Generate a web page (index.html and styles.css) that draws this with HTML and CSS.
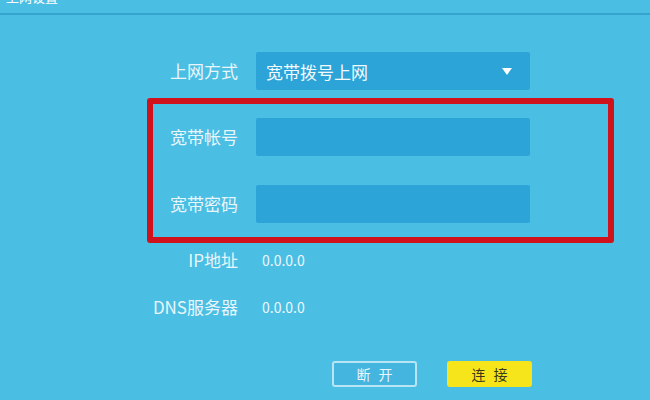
FILE: index.html
```html
<!DOCTYPE html>
<html lang="zh-CN">
<head>
<meta charset="utf-8">
<title>上网设置</title>
<link rel="stylesheet" href="styles.css">
</head>
<body>
<div class="page">
  <header class="topbar"><span class="title">上网设置</span></header>
  <main class="form">
    <div class="row row-select">
      <label class="label">上网方式</label>
      <div class="select">
        <span class="select-text">宽带拨号上网</span>
        <svg class="caret" width="10" height="7" viewBox="0 0 10 7"><path d="M0 0 H10 L5 7 Z" fill="#ffffff"/></svg>
      </div>
    </div>
    <div class="highlight">
      <div class="row row-in">
        <label class="label">宽带帐号</label>
        <div class="input"></div>
      </div>
      <div class="row row-in row-gap">
        <label class="label">宽带密码</label>
        <div class="input"></div>
      </div>
    </div>
    <div class="row row-info">
      <span class="label">IP地址</span>
      <span class="value">0.0.0.0</span>
    </div>
    <div class="row row-info row-info2">
      <span class="label">DNS服务器</span>
      <span class="value">0.0.0.0</span>
    </div>
    <div class="actions">
      <button class="btn btn-ghost">断开</button>
      <button class="btn btn-yellow">连接</button>
    </div>
  </main>
</div>
</body>
</html>
```
FILE: styles.css
```css
* { box-sizing: border-box; }
html, body { margin: 0; padding: 0; }
body {
  width: 650px;
  height: 400px;
  overflow: hidden;
  background: #4bbee3;
  font-family: "Noto Sans CJK SC", "Noto Sans", sans-serif;
  color: #eaf7fc;
}
.page { width: 650px; height: 400px; }
.topbar {
  height: 15px;
  border-bottom: 2px solid #35a5cf;
  overflow: hidden;
  display: flex;
  align-items: flex-start;
  padding-left: 6px;
}
.title {
  font-size: 13px;
  line-height: 13px;
  margin-top: -10px;
  color: #ffffff;
}
.form { padding-top: 37px; }
.row {
  display: grid;
  grid-template-columns: 238px 274px;
  column-gap: 18px;
  align-items: center;
}
.label {
  text-align: right;
  font-size: 17px;
  line-height: 20px;
  color: #e8f6fb;
  white-space: nowrap;
}
.select {
  height: 38px;
  background: #2ca4d7;
  border-radius: 2px;
  display: flex;
  align-items: center;
  justify-content: space-between;
  padding: 0 18px 0 10px;
}
.select-text { font-size: 17px; color: #f2fafd; }
.caret { display: block; }
.highlight {
  margin-top: 8px;
  margin-left: 147px;
  width: 467px;
  border: 6px solid #d0121c;
  border-radius: 3px;
  padding: 14px 0 14px 0;
}
.row-in { grid-template-columns: 85px 274px; }
.row-gap { margin-top: 29px; }
.input {
  height: 38px;
  background: #2ca4d7;
  border-radius: 2px;
}
.row-info { height: 24px; margin-top: 5px; }
.row-info2 { margin-top: 23px; }
.value {
  font-size: 14px;
  color: #eef8fc;
  padding-left: 6px;
}
.actions {
  display: flex;
  gap: 30px;
  padding-left: 332px;
  margin-top: 42px;
}
.btn {
  width: 85px;
  height: 26px;
  font-family: "Noto Sans CJK SC", sans-serif;
  font-size: 14px;
  letter-spacing: 8px;
  text-indent: 8px;
  border-radius: 3px;
  padding: 0;
  line-height: 22px;
}
.btn-ghost {
  background: #43b5de;
  border: 2px solid #b8e4f4;
  color: #e8f6fb;
}
.btn-yellow {
  background: #f7e51c;
  border: 2px solid #f7e51c;
  color: #3b3a1a;
}
```
